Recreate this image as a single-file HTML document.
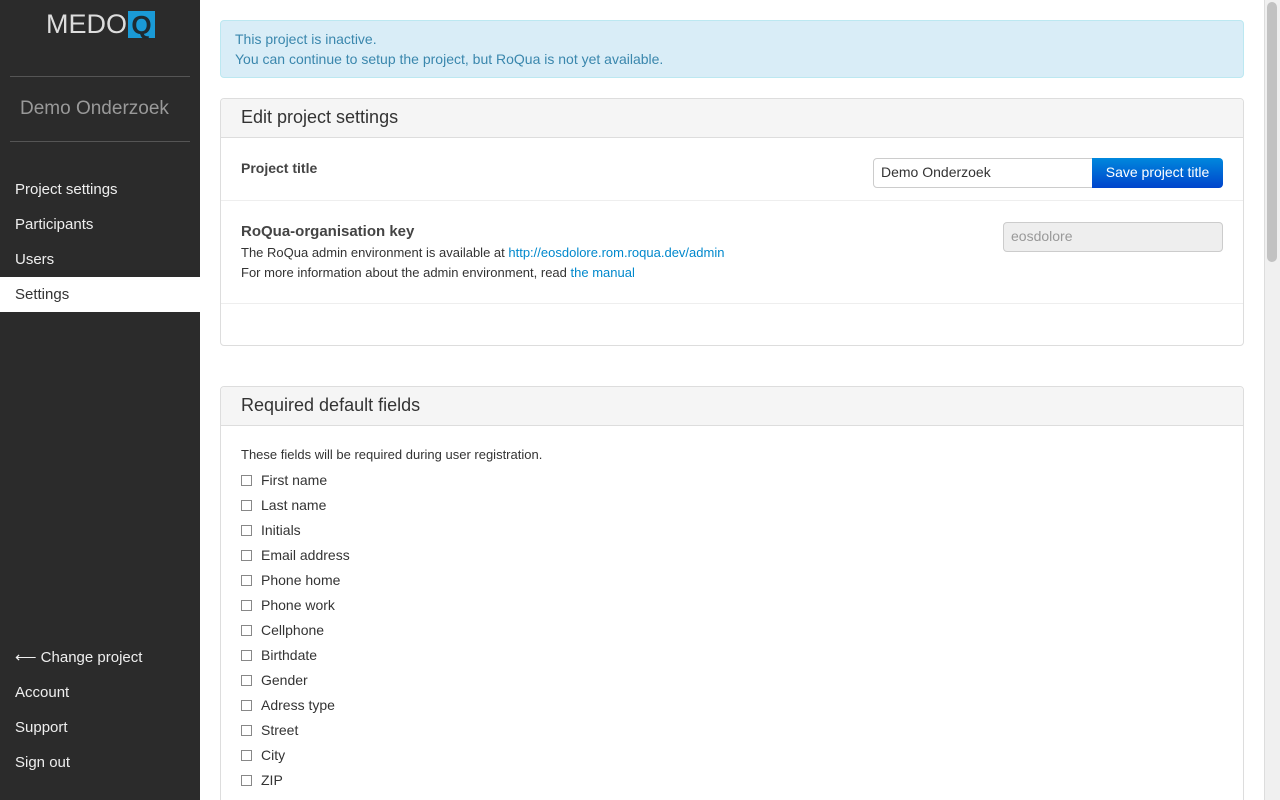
<!DOCTYPE html>
<html style="overflow:hidden;height:800px"><head><style>
*{box-sizing:border-box;margin:0;padding:0}
body{width:1280px;height:800px;overflow:hidden;font-family:"Liberation Sans",Arial,sans-serif;font-size:14px;color:#333;background:#fff;position:relative}
.side{position:absolute;left:0;top:0;width:200px;height:800px;background:#2b2b2b}
.logo{position:absolute;left:46px;top:9px;font-size:27px;color:#ddd;display:flex;align-items:center}
.logo b{display:inline-block;width:27px;height:27px;background:#1a9ad6;color:#1f2a30;font-weight:bold;text-align:center;line-height:28px;margin-left:1px;font-size:26px}
.hr{position:absolute;left:10px;width:180px;height:1px;background:#555}
.proj{position:absolute;left:20px;top:98px;font-size:19px;color:#999}
.nav a{position:absolute;left:0;width:200px;height:35px;line-height:35px;padding-left:15px;color:#eee;font-size:15px;text-decoration:none}
.nav a.act{background:#fff;color:#333}
.scroll{position:absolute;left:1264px;top:0;width:16px;height:800px;background:#f0f0f0;border-left:1px solid #ddd}
.thumb{position:absolute;left:1267px;top:2px;width:10px;height:260px;background:#c2c2c2;border-radius:5px}
.alert{position:absolute;left:220px;top:20px;width:1024px;height:58px;background:#d9edf7;border:1px solid #bce8f1;border-radius:4px;color:#3a87ad;padding:8px 14px;line-height:20px;font-size:14px}
.panel{position:absolute;left:220px;width:1024px;border:1px solid #ddd;border-radius:4px;background:#fff;overflow:hidden}
.ph{height:39px;background:#f5f5f5;border-bottom:1px solid #ddd;font-size:18px;padding:8px 20px;border-radius:4px 4px 0 0}
.row{position:relative;border-bottom:1px solid #eee}
.lbl{font-weight:bold;position:absolute;left:20px;color:#444}
a.l{color:#0088cc;text-decoration:none}
.small{font-size:13px}
.inp{position:absolute;height:30px;border:1px solid #ccc;border-radius:4px;padding:5px 7px;font-size:14px}
.btn{position:absolute;left:871px;top:20px;width:131px;height:30px;background:linear-gradient(#0088dd,#0044cc);color:#fff;border-radius:0 4px 4px 0;text-align:center;line-height:29px;font-size:14px}
.cb{position:absolute;left:20px;font-size:14px;line-height:16px}
.cb i{display:inline-block;width:11px;height:11px;border:1px solid #888;vertical-align:-1px;margin-right:9px;background:#fff}
</style></head><body>
<div class="side">
<div class="logo">MEDO<b>Q</b></div>
<div class="hr" style="top:76px"></div>
<div class="proj">Demo Onderzoek</div>
<div class="hr" style="top:141px"></div>
<div class="nav">
<a style="top:172px">Project settings</a>
<a style="top:207px">Participants</a>
<a style="top:242px">Users</a>
<a class="act" style="top:277px">Settings</a>
<a style="top:640px">⟵ Change project</a>
<a style="top:675px">Account</a>
<a style="top:710px">Support</a>
<a style="top:745px">Sign out</a>
</div>
</div>
<div class="alert">This project is inactive.<br>You can continue to setup the project, but RoQua is not yet available.</div>
<div class="panel" style="top:98px;height:248px">
<div class="ph">Edit project settings</div>
<div class="row" style="height:63px">
<div class="lbl" style="top:22px">Project title</div>
<div class="inp" style="left:652px;top:20px;width:220px;border-radius:4px 0 0 4px">Demo Onderzoek</div>
<div class="btn">Save project title</div>
</div>
<div class="row" style="height:103px">
<div class="lbl" style="top:22px;font-size:15px">RoQua-organisation key</div>
<div class="small" style="position:absolute;left:20px;top:42px;line-height:20px">The RoQua admin environment is available at <a class="l">http://eosdolore.rom.roqua.dev/admin</a><br>For more information about the admin environment, read <a class="l">the manual</a></div>
<div class="inp" style="left:782px;top:21px;width:220px;background:#eee;color:#999">eosdolore</div>
</div>
</div>
<div class="panel" style="top:386px;height:420px">
<div class="ph">Required default fields</div>
<div class="small" style="position:absolute;left:20px;top:60px">These fields will be required during user registration.</div>
<div class="cb" style="top:85px"><i></i>First name</div>
<div class="cb" style="top:110px"><i></i>Last name</div>
<div class="cb" style="top:135px"><i></i>Initials</div>
<div class="cb" style="top:160px"><i></i>Email address</div>
<div class="cb" style="top:185px"><i></i>Phone home</div>
<div class="cb" style="top:210px"><i></i>Phone work</div>
<div class="cb" style="top:235px"><i></i>Cellphone</div>
<div class="cb" style="top:260px"><i></i>Birthdate</div>
<div class="cb" style="top:285px"><i></i>Gender</div>
<div class="cb" style="top:310px"><i></i>Adress type</div>
<div class="cb" style="top:335px"><i></i>Street</div>
<div class="cb" style="top:360px"><i></i>City</div>
<div class="cb" style="top:385px"><i></i>ZIP</div>
<div class="cb" style="top:410px"><i></i>Country</div>
</div>
<div class="scroll"></div><div class="thumb"></div>
</body></html>
